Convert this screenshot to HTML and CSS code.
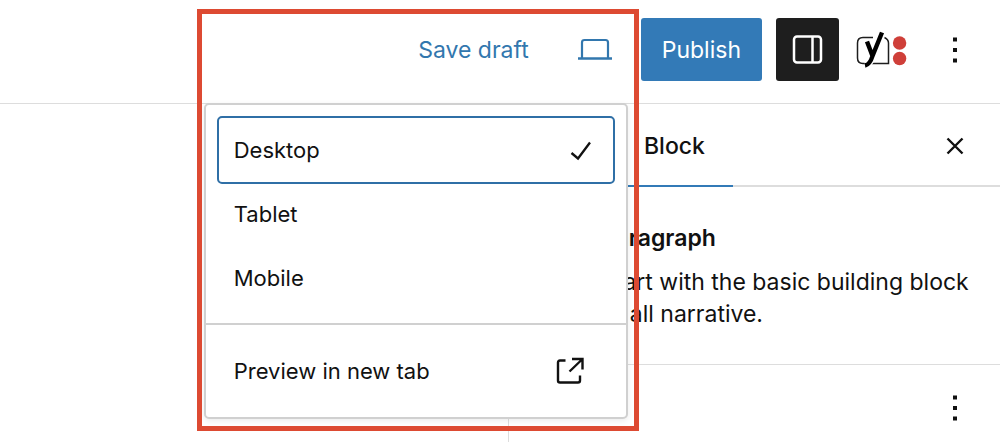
FILE: index.html
```html
<!DOCTYPE html>
<html lang="en">
<head>
<meta charset="utf-8">
<title>Edit post</title>
<link rel="stylesheet" href="styles.css">
</head>
<body>
<div class="editor">
  <header class="toolbar">
    <button class="btn btn-link" type="button">Save draft</button>
    <div class="preview">
      <button class="btn btn-icon btn-preview" type="button" aria-label="View" aria-expanded="true">
        <svg width="36" height="24" viewBox="0 0 36 24" fill="none" stroke="currentColor" stroke-width="2.200">
          <path d="M5 20V4.500Q5 2 7.500 2H28.500Q31 2 31 4.500V20"/>
          <path d="M1 20.500H35" stroke-width="2.600"/>
        </svg>
      </button>
      <div class="menu" role="menu">
        <div class="menu-group">
          <button class="menu-item is-focused" type="button" role="menuitemradio" aria-checked="true">
            Desktop
            <svg class="check" width="24" height="24" viewBox="0 0 24 24" fill="none" stroke="currentColor" stroke-width="2.300">
              <path d="M3.500 15L10 20.500L22 4.500"/>
            </svg>
          </button>
          <button class="menu-item" type="button" role="menuitemradio" aria-checked="false">Tablet</button>
          <button class="menu-item" type="button" role="menuitemradio" aria-checked="false">Mobile</button>
        </div>
        <div class="menu-group">
          <button class="menu-item" type="button" role="menuitem">
            Preview in new tab
            <svg class="external" width="30" height="30" viewBox="0 0 30 30" fill="none" stroke="currentColor" stroke-width="2.400">
              <path d="M10.500 4.500H5Q3 4.500 3 6.500V24.500Q3 26.500 5 26.500H23Q25 26.500 25 24.500V19.500"/>
              <path d="M17 3H27.500V13.500M27 3.500L14.500 15.500"/>
            </svg>
          </button>
        </div>
      </div>
      <div class="highlight"></div>
    </div>
    <button class="btn btn-primary" type="button">Publish</button>
    <button class="btn btn-icon btn-dark" type="button" aria-label="Settings">
      <svg width="32" height="30" viewBox="0 0 32 30" fill="none" stroke="currentColor" stroke-width="2.500">
        <rect x="2" y="1.500" width="27" height="26" rx="3"/>
        <path d="M20.500 2V27"/>
      </svg>
    </button>
    <button class="btn btn-yoast" type="button" aria-label="Yoast SEO">
      <svg width="56" height="40" viewBox="0 0 56 40" fill="none">
        <path d="M20 7.500H10Q4.500 7.500 4.500 13V28Q4.500 33.500 10 33.500H35.500V13Q35.500 9.500 31.500 7.500" stroke="#1e1e1e" stroke-width="1.500"/>
        <path d="M29 2L18.500 28Q16.500 34.500 12 35.200M14 11.500L19.500 26.500" stroke="#fff" stroke-width="7"/>
        <path d="M29 2.500L19.500 26Q17 34.500 12 35.500M14 11.500L19.500 26" stroke="#000" stroke-width="4.400"/>
        <circle cx="46.600" cy="13" r="6.700" fill="#cf3f39"/>
        <circle cx="46.600" cy="28.500" r="6.700" fill="#cf3f39"/>
      </svg>
    </button>
    <button class="btn btn-icon" type="button" aria-label="Options">
      <svg width="4" height="26" viewBox="0 0 4 26" fill="currentColor">
        <path d="M0 0.500h4v4H0zM0 11h4v4H0zM0 21.500h4v4H0z"/>
      </svg>
    </button>
  </header>
  <div class="body">
    <main class="canvas"></main>
    <aside class="sidebar">
      <div class="tabs">
        <button class="tab is-active" type="button">Block</button>
        <button class="btn btn-icon close" type="button" aria-label="Close settings">
          <svg width="18" height="18" viewBox="0 0 18 18" fill="none" stroke="currentColor" stroke-width="2.400">
            <path d="M1.500 1.500L16.500 16.500M16.500 1.500L1.500 16.500"/>
          </svg>
        </button>
      </div>
      <section class="card">
        <h2 class="card-title">Paragraph</h2>
        <p class="card-text">Start with the basic building block of all narrative.</p>
      </section>
      <section class="panel">
        <button class="btn btn-icon" type="button" aria-label="Panel options">
          <svg width="4" height="26" viewBox="0 0 4 26" fill="currentColor">
            <path d="M0 0.500h4v4H0zM0 11h4v4H0zM0 21.500h4v4H0z"/>
          </svg>
        </button>
      </section>
    </aside>
  </div>
</div>
</body>
</html>
```
FILE: styles.css
```css
* {
  box-sizing: border-box;
}

body {
  margin: 0;
  background: #fff;
  color: #111;
  font-family: Inter, "Liberation Sans", sans-serif;
  font-size: 23px;
  line-height: 32px;
}

button {
  margin: 0;
  padding: 0;
  border: 0;
  background: none;
  color: inherit;
  font: inherit;
}

svg {
  display: block;
  flex: none;
}

.editor {
  display: flex;
  flex-direction: column;
  height: 100vh;
  overflow: hidden;
}

.toolbar {
  display: flex;
  flex: none;
  align-items: center;
  justify-content: flex-end;
  gap: 14px;
  padding: 18px 14px 22px;
  border-bottom: 1px solid #ddd;
}

.btn {
  display: flex;
  align-items: center;
  justify-content: center;
  height: 63px;
  padding: 0 21px;
  border-radius: 3px;
}

.btn-icon {
  width: 63px;
  padding: 0;
}

.btn-yoast {
  padding: 0;
}

.btn-link,
.btn-preview {
  color: #3277ae;
}

.btn-primary {
  background: #337ab7;
  color: #fff;
}

.btn-dark {
  background: #1e1e1e;
  color: #fff;
}

.preview {
  position: relative;
  z-index: 1;
}

.menu {
  position: absolute;
  top: 85px;
  right: -1px;
  width: 424px;
  border: 2px solid #d0d0d0;
  border-radius: 5px;
  background: #fff;
  box-shadow: 0 2px 6px rgba(0, 0, 0, 0.08);
  font-size: 22px;
}

.menu-group {
  padding: 13px;
}

.menu-group + .menu-group {
  padding: 14px 13px;
  border-top: 2px solid #d0d0d0;
}

.menu-item {
  display: flex;
  align-items: center;
  justify-content: space-between;
  width: 100%;
  height: 64px;
  padding: 0 15px;
  border-radius: 3px;
  text-align: left;
}

.menu-item.is-focused {
  outline: 2px solid #2f6fa6;
}

.check {
  margin-right: 6px;
}

.external {
  margin-right: 13px;
}

.highlight {
  position: absolute;
  top: -9px;
  right: -12px;
  width: 442px;
  height: 422px;
  border: 5px solid #dd4a32;
  pointer-events: none;
}

.body {
  display: flex;
  flex: 1;
}

.canvas {
  flex: 1;
}

.sidebar {
  flex: none;
  width: 492px;
  border-left: 1px solid #ddd;
}

.tabs {
  display: flex;
  align-items: stretch;
  justify-content: space-between;
  height: 83px;
  padding: 0 14px 0 107px;
  box-shadow: inset 0 -2px #ddd;
}

.tab {
  padding: 0 28px;
  font-weight: 500;
}

.tab.is-active {
  box-shadow: inset 0 -2px #337ab7;
}

.close {
  align-self: center;
}

.card {
  padding: 35px 28px 34px 92px;
}

.card-title {
  margin: 0 0 12px;
  font-size: 23px;
  font-weight: 600;
}

.card-text {
  margin: 0;
}

.panel {
  display: flex;
  justify-content: flex-end;
  padding: 11px 14px;
  border-top: 1px solid #ddd;
}
```
